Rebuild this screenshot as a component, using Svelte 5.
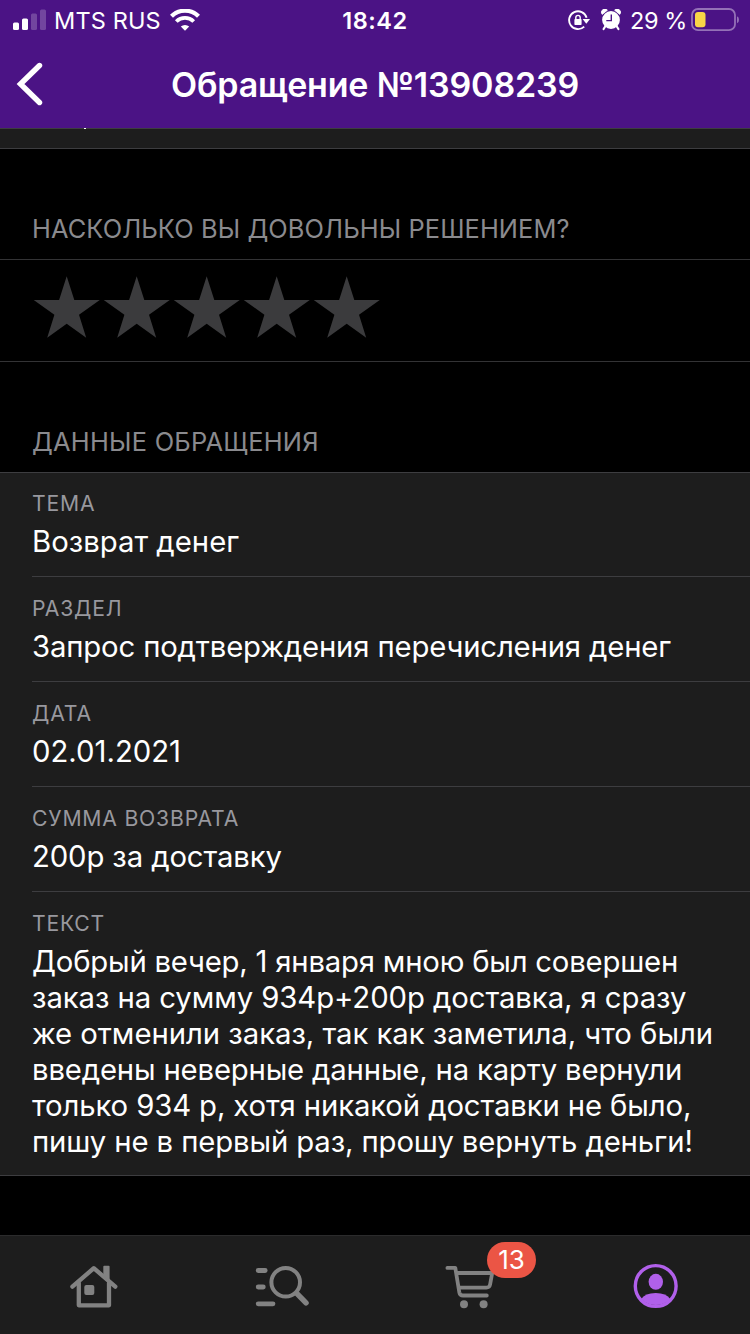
<script>
    const title = 'Обращение №13908239';

    const fields = [
        { label: 'ТЕМА', value: 'Возврат денег', tracking: 0 },
        { label: 'РАЗДЕЛ', value: 'Запрос подтверждения перечисления денег', tracking: -0.16 },
        { label: 'ДАТА', value: '02.01.2021', tracking: 0 },
        { label: 'СУММА ВОЗВРАТА', value: '200р за доставку', tracking: -0.13 }
    ];

    const message = [
        { text: 'Добрый вечер, 1 января мною был совершен', tracking: -0.21 },
        { text: 'заказ на сумму 934р+200р доставка, я сразу', tracking: -0.08 },
        { text: 'же отменили заказ, так как заметила, что были', tracking: -0.04 },
        { text: 'введены неверные данные, на карту вернули', tracking: -0.17 },
        { text: 'только 934 р, хотя никакой доставки не было,', tracking: -0.12 },
        { text: 'пишу не в первый раз, прошу вернуть деньги!', tracking: -0.12 }
    ];

    const cartCount = 13;
</script>

<div class="screen">
    <header>
        <div class="status-bar">
            <div class="status-left">
                <svg class="signal" width="34" height="22" viewBox="0 0 34 22" fill="#fff">
                    <rect x="0" y="13.5" width="6" height="7.5" rx="1.5" />
                    <rect x="9" y="9.5" width="6" height="11.5" rx="1.5" />
                    <rect x="18" y="4.5" width="6" height="16.5" rx="1.5" opacity="0.22" />
                    <rect x="27" y="0.5" width="6" height="20.5" rx="1.5" opacity="0.22" />
                </svg>
                <span class="carrier">MTS RUS</span>
                <svg class="wifi" width="30" height="22" viewBox="0 0 30 22" fill="none" stroke="#fff">
                    <path d="M1.5 7.3 A19 19 0 0 1 28.5 7.3" stroke-width="4.2" />
                    <path d="M6.3 12.5 A12.3 12.3 0 0 1 23.7 12.5" stroke-width="3.8" />
                    <path d="M15 21.8 L10.8 17.6 A6 6 0 0 1 19.2 17.6 Z" fill="#fff" stroke="none" />
                </svg>
            </div>
            <span class="clock">18:42</span>
            <div class="status-right">
                <svg class="lock" width="23" height="22" viewBox="0 0 23 22" fill="none" stroke="#fff">
                    <path d="M16.2 17.6 A8.9 8.9 0 1 1 18.6 8.8" stroke-width="1.9" />
                    <path d="M14.6 10 H22 L18.3 14.8 Z" fill="#fff" stroke="none" />
                    <rect x="6.4" y="10" width="7.2" height="6" rx="0.8" fill="#fff" stroke="none" />
                    <path d="M7.8 10.4 V8.6 A2.2 2.2 0 0 1 12.2 8.6 V10.4" stroke-width="1.4" />
                </svg>
                <svg class="alarm" width="20" height="22" viewBox="0 0 20 22">
                    <path d="M4.5 17 L2.6 20 M15.5 17 L17.4 20" stroke="#fff" stroke-width="2.2" stroke-linecap="round" />
                    <path d="M1.2 5.4 A3.1 3.1 0 0 1 6.4 1.2 Z M18.8 5.4 A3.1 3.1 0 0 0 13.6 1.2 Z" fill="#fff" stroke="#fff" stroke-width="0.8" />
                    <circle cx="10" cy="11" r="8.9" fill="#fff" />
                    <path d="M10.3 5.5 V11.6 H5.3" fill="none" stroke="#4b1385" stroke-width="1.4" />
                </svg>
                <span class="percent">29 %</span>
                <svg class="battery" width="48" height="24" viewBox="0 0 48 24">
                    <rect x="1" y="1" width="43" height="21.2" rx="6" fill="none" stroke="#9471b7" stroke-width="1.8" />
                    <rect x="4" y="4" width="10.5" height="15.2" rx="3" fill="#f8d547" />
                    <path d="M46 8.2 Q48 9 48 11.7 Q48 14.5 46 15.3 Z" fill="#9471b7" />
                </svg>
            </div>
        </div>
        <nav>
            <svg class="back" width="28" height="44" viewBox="0 0 28 44">
                <path d="M23.5 3.5 L4.5 22 L23.5 40.5" fill="none" stroke="#fff" stroke-width="5.4" stroke-linecap="round" />
            </svg>
            <h1>{title}</h1>
        </nav>
    </header>

    <main>
        <div class="previous-row"></div>

        <h2 class="question">НАСКОЛЬКО ВЫ ДОВОЛЬНЫ РЕШЕНИЕМ?</h2>
        <div class="rating">
            {#each Array(5) as _}
                <svg width="70" height="64" viewBox="0 0 70 64">
                    <polygon points="34.7,0.3 42.3,24 67.8,24 47,38.8 54.2,61.8 34.7,47.8 15.2,61.8 22.4,38.8 1.7,24 27.1,24" fill="#3b3b3d" />
                </svg>
            {/each}
        </div>

        <h2>ДАННЫЕ ОБРАЩЕНИЯ</h2>
        <section class="details">
            {#each fields as field}
                <div class="field">
                    <div class="label">{field.label}</div>
                    <div class="value" style="letter-spacing: {field.tracking}px">{field.value}</div>
                </div>
            {/each}
            <div class="field message">
                <div class="label">ТЕКСТ</div>
                <div class="value">
                    {#each message as line}
                        <div style="letter-spacing: {line.tracking}px">{line.text}</div>
                    {/each}
                </div>
            </div>
        </section>
    </main>

    <footer>
        <div class="tab">
            <svg width="60" height="60" viewBox="0 0 60 60" fill="none" stroke="#828282" stroke-width="4.3" stroke-linecap="round" stroke-linejoin="round">
                <path d="M8.4 30.6 L29.8 12.2 L51.3 30.6" />
                <path d="M14.8 27 V49.3 H45 V27" />
                <path d="M39.3 10.8 Q39.3 9.8 40.3 9.8 H44.6 Q45.6 9.8 45.6 10.8 V25.5 L39.3 20 Z" fill="#828282" stroke="none" />
                <rect x="20.3" y="29" width="10" height="10" rx="2" fill="#828282" stroke="none" />
            </svg>
        </div>
        <div class="tab">
            <svg width="60" height="60" viewBox="0 0 60 60" fill="none" stroke="#828282" stroke-linecap="round">
                <path d="M7.2 14.5 H14.2 M7.2 31 H12.3 M7.2 47.8 H22" stroke-width="4.8" />
                <circle cx="34.7" cy="26.2" r="14.3" stroke-width="4" />
                <path d="M46 37.6 L55 46.8" stroke-width="5.5" />
            </svg>
        </div>
        <div class="tab">
            <svg width="60" height="60" viewBox="0 0 60 60" fill="none" stroke="#828282" stroke-width="3.8" stroke-linecap="round" stroke-linejoin="round">
                <path d="M8.4 11.9 H16.3 L20.3 36.3 Q20.9 39.5 24 39.5 H47.8" />
                <path d="M18.2 17 H53.2 L51.1 28.5 Q50.5 31.6 47.4 31.6 H20.5" />
                <circle cx="25" cy="48.3" r="4" fill="#828282" stroke="none" />
                <circle cx="44.6" cy="48.3" r="4" fill="#828282" stroke="none" />
            </svg>
            <span class="badge">{cartCount}</span>
        </div>
        <div class="tab">
            <svg width="60" height="60" viewBox="0 0 60 60">
                <circle cx="29.7" cy="30" r="20.4" fill="none" stroke="#b160ea" stroke-width="3.4" />
                <ellipse cx="29.8" cy="25.8" rx="7.2" ry="8" fill="#b160ea" />
                <path d="M15.2 43 Q19 37 29.7 37 Q40.4 37 44.3 43 A20.4 20.4 0 0 1 15.2 43 Z" fill="#b160ea" />
            </svg>
        </div>
    </footer>
</div>

<style>
    :global(body) {
        background: #000;
    }

    .screen {
        width: 750px;
        height: 1334px;
        display: flex;
        flex-direction: column;
        overflow: hidden;
        background: #000;
        color: #fff;
        font-family: Inter, Roboto, "Liberation Sans", sans-serif;
    }

    h1,
    h2 {
        margin: 0;
    }

    svg {
        display: block;
        flex: none;
    }

    header {
        height: 128px;
        flex: none;
        background: #4b1385;
    }

    .status-bar {
        height: 40px;
        display: grid;
        grid-template-columns: 1fr auto 1fr;
        align-items: center;
        font-size: 23.5px;
        line-height: 38px;
        white-space: nowrap;
    }

    .status-left,
    .status-right {
        display: flex;
        align-items: center;
    }

    .status-left {
        padding-left: 13px;
    }

    .status-right {
        justify-content: flex-end;
        padding-right: 11px;
    }

    .carrier,
    .clock,
    .percent {
        padding-top: 2px;
    }

    .carrier {
        width: 108px;
        margin-left: 7px;
        letter-spacing: 0.15px;
    }

    .wifi {
        margin-left: 8px;
    }

    .clock {
        font-weight: 600;
        letter-spacing: 0.5px;
    }

    .alarm {
        margin-left: 10px;
    }

    .percent {
        margin: 0 4px 0 9px;
        letter-spacing: -0.4px;
    }

    nav {
        height: 88px;
        display: grid;
        grid-template-columns: 60px 1fr 60px;
        align-items: center;
    }

    .back {
        margin-left: 16px;
    }

    h1 {
        font-size: 34px;
        font-weight: 600;
        letter-spacing: -0.17px;
        text-align: center;
        white-space: nowrap;
    }

    main {
        flex: 1;
    }

    .previous-row {
        height: 19px;
        border-top: 1px solid #3d3d40;
        border-bottom: 1px solid #3d3d40;
        background: #1d1d1d;
    }

    /* tail of the row that is scrolled under the header */
    .previous-row::before {
        content: "";
        display: block;
        width: 2px;
        height: 1px;
        margin: -1px 0 0 84px;
        background: #fff;
    }

    h2 {
        height: 110px;
        padding: 64px 32px 0;
        box-sizing: border-box;
        color: #8a8a8e;
        font-size: 25.4px;
        font-weight: 400;
        line-height: 32px;
        letter-spacing: 0.25px;
        white-space: nowrap;
    }

    .question {
        letter-spacing: 0.1px;
    }

    .rating {
        height: 103px;
        display: flex;
        padding: 16px 0 0 32px;
        box-sizing: border-box;
        border-top: 1px solid #333335;
        border-bottom: 1px solid #333335;
    }

    .details {
        padding-left: 32px;
        background: #1d1d1d;
        border-top: 1px solid #3d3d40;
        border-bottom: 1px solid #3d3d40;
    }

    .field {
        height: 105px;
        padding-top: 17px;
        box-sizing: border-box;
        border-bottom: 1px solid #3d3d40;
        white-space: nowrap;
    }

    .field:first-child {
        height: 104px;
        padding-top: 16px;
    }

    .label {
        height: 28px;
        color: #98989e;
        font-size: 21.2px;
        line-height: 28px;
        letter-spacing: 0.8px;
    }

    .value {
        margin-top: 7px;
        font-size: 29.3px;
        line-height: 36px;
    }

    .message {
        height: 283px;
        border-bottom: none;
    }

    footer {
        height: 99px;
        flex: none;
        display: flex;
        box-sizing: border-box;
        border-top: 1px solid #2b2b2c;
        background: #1d1d1d;
    }

    .tab {
        flex: 1;
        position: relative;
        display: flex;
        justify-content: center;
        padding-top: 20px;
    }

    .badge {
        position: absolute;
        top: 6px;
        left: 112px;
        width: 49px;
        height: 36px;
        border-radius: 18px;
        background: #eb5545;
        font-size: 26px;
        line-height: 36px;
        text-align: center;
    }
</style>
